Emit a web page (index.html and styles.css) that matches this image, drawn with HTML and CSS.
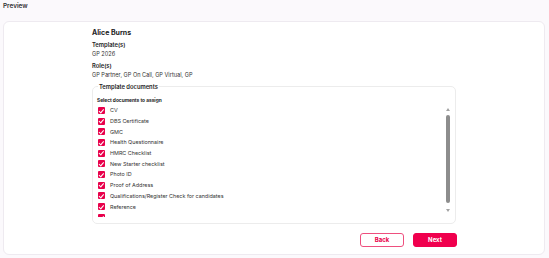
FILE: index.html
```html
<!DOCTYPE html>
<html lang="en">
  <head>
    <meta charset="UTF-8" />
    <title>Preview</title>
    <link rel="stylesheet" href="styles.css">
  </head>
  <body>
    <div class="page-title">Preview</div>
    <div class="preview-card">
      <div class="s-body">
        <h5 class="s-name">Alice Burns</h5>
        <div class="s-field">
          <div class="s-label">Template(s)</div>
          <div class="s-value">GP 2026</div>
        </div>
        <div class="s-field">
          <div class="s-label">Role(s)</div>
          <div class="s-value">GP Partner, GP On Call, GP Virtual, GP</div>
        </div>
        <fieldset class="s-docs">
          <legend>Template documents</legend>
          <p class="s-docs-title">Select documents to assign</p>
          <div class="s-scroll">
            <ul class="s-docs-list">
              <li><label><input type="checkbox" checked /><span>CV</span></label></li>
              <li><label><input type="checkbox" checked /><span>DBS Certificate</span></label></li>
              <li><label><input type="checkbox" checked /><span>GMC</span></label></li>
              <li><label><input type="checkbox" checked /><span>Health Questionnaire</span></label></li>
              <li><label><input type="checkbox" checked /><span>HMRC Checklist</span></label></li>
              <li><label><input type="checkbox" checked /><span>New Starter checklist</span></label></li>
              <li><label><input type="checkbox" checked /><span>Photo ID</span></label></li>
              <li><label><input type="checkbox" checked /><span>Proof of Address</span></label></li>
              <li><label><input type="checkbox" checked /><span>Qualifications/Register Check for candidates</span></label></li>
              <li><label><input type="checkbox" checked /><span>Reference</span></label></li>
              <li><label><input type="checkbox" checked /></label></li>
            </ul>
            <div class="s-scrollbar">
              <span class="s-arrow s-arrow-up"></span>
              <span class="s-thumb"></span>
              <span class="s-arrow s-arrow-down"></span>
            </div>
          </div>
        </fieldset>
        <div class="s-actions">
          <a href="javascript:void (0);" class="btn btn-back">Back</a>
          <a href="javascript:void (0);" class="btn btn-next">Next</a>
        </div>
      </div>
    </div>
  </body>
</html>
```

FILE: styles.css
```css
* {
  margin: 0;
  padding: 0;
  border: 0;
  list-style: none;
  text-decoration: none;
  box-sizing: border-box;
}
body {
  background-color: #fbf9fc;
  font-family: Inter, 'Liberation Sans', sans-serif;
  color: #222;
  font-size: 5.4px;
}
.page-title {
  height: 14px;
  line-height: 13px;
  padding-left: 3px;
  font-size: 6.4px;
  font-weight: 600;
  color: #333;
}
.preview-card {
  margin: 7px 4px 3px 3px;
  height: 234px;
  background-color: #fff;
  border: 1px solid #eeeaf0;
  border-radius: 6px;
}
.s-body {
  width: 365px;
  margin-left: 88px;
  padding-top: 6px;
}
.s-name {
  font-size: 7px;
  font-weight: 700;
  line-height: 10px;
  margin-bottom: 2px;
}
.s-field {
  margin-bottom: 2px;
}
.s-label {
  font-size: 5.8px;
  font-weight: 600;
  line-height: 9px;
}
.s-value {
  font-size: 5.6px;
  line-height: 9px;
  margin-top: 1px;
  color: #333;
}
.s-docs {
  margin-top: 2px;
  margin-right: 1px;
  border: 1px solid #ececec;
  border-radius: 5px;
  padding: 0 0 0 4px;
  height: 142px;
}
.s-docs legend {
  font-size: 5.8px;
  font-weight: 600;
  padding: 0 1px;
  margin-left: 1px;
  line-height: 9px;
}
.s-docs-title {
  font-size: 4.8px;
  font-weight: 700;
  line-height: 9px;
  margin-top: 5px;
}
.s-scroll {
  display: flex;
  height: 112px;
}
.s-docs-list {
  flex: 1;
  overflow: hidden;
}
.s-docs-list li {
  height: 10.7px;
}
.s-docs-list label {
  display: flex;
  align-items: center;
  height: 10.7px;
  gap: 5px;
  font-size: 5.4px;
  color: #333;
}
.s-docs-list input {
  -webkit-appearance: none;
  appearance: none;
  flex: none;
  width: 7px;
  height: 7px;
  margin-left: 1px;
  border-radius: 1px;
  background-color: #e8004b;
  position: relative;
}
.s-docs-list input::after {
  content: '';
  position: absolute;
  left: 2.3px;
  top: 0.8px;
  width: 1.6px;
  height: 3.6px;
  border: solid #fff;
  border-width: 0 1px 1px 0;
  transform: rotate(40deg);
}
.s-scrollbar {
  width: 11px;
  padding: 3px 3px 0 0;
  display: flex;
  flex-direction: column;
  align-items: center;
}
.s-arrow {
  width: 0;
  height: 0;
  border-left: 2.5px solid transparent;
  border-right: 2.5px solid transparent;
}
.s-arrow-up {
  border-bottom: 3px solid #a3a3a3;
}
.s-arrow-down {
  border-top: 3px solid #a3a3a3;
}
.s-thumb {
  width: 4px;
  height: 88px;
  margin: 4px 0 6px;
  border-radius: 2px;
  background-color: #8d8d8d;
}
.s-actions {
  display: flex;
  justify-content: flex-end;
  gap: 9px;
  margin-top: 9px;
}
.btn {
  display: inline-block;
  width: 44px;
  height: 14px;
  line-height: 12px;
  text-align: center;
  font-size: 6px;
  font-weight: 700;
  border-radius: 3px;
  border: 1px solid #ee4f7e;
}
.btn-back {
  color: #e8004b;
  background-color: #fff;
}
.btn-next {
  color: #fff;
  background-color: #f0004e;
  border-color: #f0004e;
}
```
